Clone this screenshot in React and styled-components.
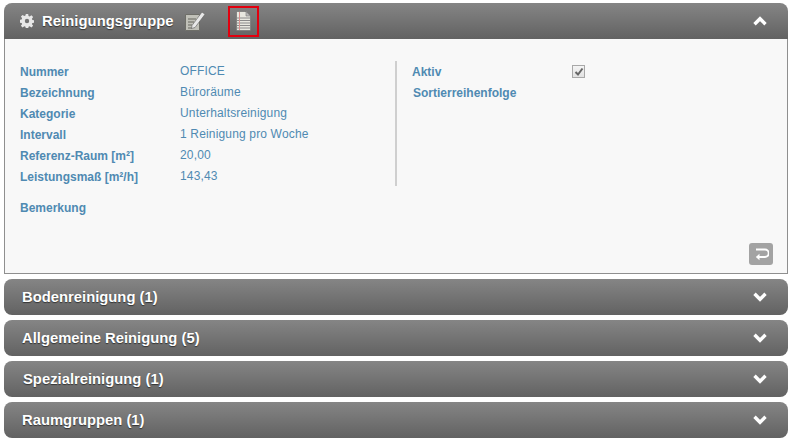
import React from "react";
import styled, { createGlobalStyle } from "styled-components";

const Global = createGlobalStyle`
  html, body { margin: 0; padding: 0; background: #fff; }
  body { font-family: "Liberation Sans", Arial, sans-serif; }
`;

const Page = styled.div`
  width: 791px;
  height: 442px;
  box-sizing: border-box;
  padding: 3px 3px 0 4px;
  display: flex;
  flex-direction: column;
`;

const Bar = styled.div`
  height: 36px;
  flex: none;
  box-sizing: border-box;
  display: flex;
  align-items: center;
  padding: 0 21px 0 ${(p) => p.$pad || 18}px;
  margin-top: ${(p) => (p.$open ? 0 : 5)}px;
  border-radius: ${(p) => (p.$open ? "8px 8px 0 0" : "8px")};
  background: linear-gradient(#858585, #626262);
`;

const BarTitle = styled.span`
  color: #fff;
  font-size: 14.8px;
  font-weight: bold;
  letter-spacing: ${(p) => p.$ls || 0}px;
  text-shadow: 0 1px 1px #333;
`;

const Spacer = styled.div`
  flex: 1;
`;

const Gear = styled.svg`
  width: 14px;
  height: 14px;
  margin-right: 8px;
  flex: none;
`;

const EditIcon = styled.svg`
  width: 22px;
  height: 22px;
  margin-left: 10px;
  flex: none;
`;

const NoteFrame = styled.div`
  width: 31px;
  height: 31px;
  box-sizing: border-box;
  margin-left: 22px;
  border: 2px solid #e2000f;
  display: flex;
  align-items: center;
  justify-content: center;
  flex: none;
`;

const Panel = styled.div`
  height: 235px;
  flex: none;
  box-sizing: border-box;
  border: 1px solid #8f8f8f;
  border-top: 0;
  background: #f8f8f8;
  padding: 22px 15px 0 15px;
  position: relative;
`;

const Columns = styled.div`
  display: flex;
`;

const Left = styled.div`
  width: 375px;
  height: 125px;
  border-right: 2px solid #cfcfcf;
  flex: none;
`;

const Right = styled.div`
  padding-left: 15px;
  flex: 1;
`;

const Row = styled.div`
  display: flex;
  height: 21px;
  align-items: center;
  font-size: 12px;
`;

const Label = styled.div`
  width: ${(p) => p.$w || 160}px;
  flex: none;
  font-weight: bold;
  color: #4f8ab2;
  padding-left: ${(p) => p.$pl || 0}px;
  box-sizing: border-box;
`;

const Value = styled.div`
  color: #4f8ab2;
  position: relative;
  top: -1px;
  letter-spacing: 0.16px;
`;

const Note = styled(Row)`
  margin-top: 11px;
`;

const Check = styled.div`
  width: 11px;
  height: 11px;
  border: 1px solid #a8a8a8;
  background: linear-gradient(#f4f4f4, #e2e2e2);
  display: flex;
  align-items: center;
  justify-content: center;
`;

const BackButton = styled.div`
  position: absolute;
  right: 14px;
  bottom: 8px;
  width: 24px;
  height: 22px;
  border-radius: 3px;
  background: #a3a3a3;
  display: flex;
  align-items: center;
  justify-content: center;
`;

const Chevron = ({ up }) => (
  <svg width="14" height="10" viewBox="0 0 14 10">
    <path
      d={up ? "M1.5 8.2 L7 2.7 L12.5 8.2" : "M1.5 1.8 L7 7.3 L12.5 1.8"}
      fill="none"
      stroke="#fff"
      strokeWidth="3.4"
    />
  </svg>
);

const rows = [
  ["Nummer", "OFFICE"],
  ["Bezeichnung", "Büroräume"],
  ["Kategorie", "Unterhaltsreinigung"],
  ["Intervall", "1 Reinigung pro Woche"],
  ["Referenz-Raum [m²]", "20,00"],
  ["Leistungsmaß [m²/h]", "143,43"],
];

const bars = [
  ["Bodenreinigung (1)", 18],
  ["Allgemeine Reinigung (5)", 18],
  ["Spezialreinigung (1)", 19],
  ["Raumgruppen (1)", 18],
];

export default function App() {
  return (
    <Page>
      <Global />
      <Bar $open $pad={16}>
        <Gear viewBox="0 0 14 14">
          <path
            fill="#e8e8e8"
            fillRule="evenodd"
            d="M5.8 0h2.4l.3 2 1.2.5 1.7-1.2 1.7 1.7-1.2 1.7.5 1.2 2 .3v2.4l-2 .3-.5 1.2 1.2 1.7-1.7 1.7-1.7-1.2-1.2.5-.3 2H5.8l-.3-2-1.2-.5-1.7 1.2-1.7-1.7 1.2-1.7-.5-1.2-2-.3V5.8l2-.3.5-1.2L.9 2.6 2.6.9l1.7 1.2 1.2-.5zM7 4.8a2.2 2.2 0 1 0 0 4.4 2.2 2.2 0 0 0 0-4.4z"
          />
        </Gear>
        <BarTitle $ls={0.06}>Reinigungsgruppe</BarTitle>
        <EditIcon viewBox="0 0 22 22">
          <path d="M1.5 4.5h14v16h-14z" fill="#c0c0b8" stroke="#6e6e68" />
          <path d="M4 9h8M4 12h6M4 15h4M4 18h4" stroke="#66665f" strokeWidth="1" />
          <path d="M8 15.5 L18 2 L21 4.3 L11 17.5 L7.5 18.5z" fill="#e8e8e8" stroke="#5c5c5c" strokeWidth="0.6" />
        </EditIcon>
        <NoteFrame>
          <svg width="15" height="20" viewBox="0 0 15 20">
            <path d="M.5.5h9.5l4.5 4.5v14.5H.5z" fill="#e8e8e0" stroke="#666" strokeWidth="0.6" />
            <path d="M10 .5v4.5h4.5z" fill="#bbb" stroke="#777" strokeWidth="0.6" />
            <path d="M1 7h13M1 9.5h13M1 12h13M1 14.5h13M1 17h13" stroke="#8a8a8a" strokeWidth="1" />
            <path d="M3.5 1v18" stroke="#d9908e" strokeWidth="1" />
          </svg>
        </NoteFrame>
        <Spacer />
        <Chevron up />
      </Bar>
      <Panel>
        <Columns>
          <Left>
            {rows.map(([l, v]) => (
              <Row key={l}>
                <Label>{l}</Label>
                <Value>{v}</Value>
              </Row>
            ))}
          </Left>
          <Right>
            <Row>
              <Label $w={160}>Aktiv</Label>
              <Check>
                <svg width="10" height="10" viewBox="0 0 10 10">
                  <path d="M1.5 5 L4 7.5 L8.5 1.5" fill="none" stroke="#666" strokeWidth="2" />
                </svg>
              </Check>
            </Row>
            <Row>
              <Label $w={160} $pl={1}>Sortierreihenfolge</Label>
            </Row>
          </Right>
        </Columns>
        <Note>
          <Label>Bemerkung</Label>
        </Note>
        <BackButton>
          <svg width="15" height="13" viewBox="0 0 15 13">
            <path d="M2 1.5h9a2.8 2.8 0 0 1 0 7.5H3" fill="none" stroke="#fff" strokeWidth="2" />
            <path d="M5.5 5.8 L1.8 9 L5.5 12.2z" fill="#fff" />
          </svg>
        </BackButton>
      </Panel>
      {bars.map(([t, pad]) => (
        <Bar key={t} $pad={pad}>
          <BarTitle>{t}</BarTitle>
          <Spacer />
          <Chevron />
        </Bar>
      ))}
    </Page>
  );
}
